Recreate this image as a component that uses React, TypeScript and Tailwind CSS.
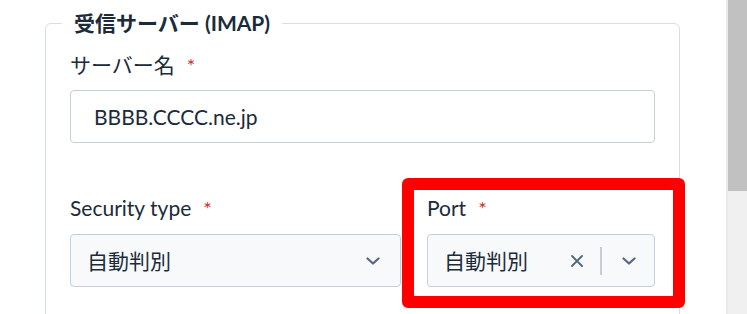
import React from 'react';

const Chevron: React.FC = () => (
  <svg width="14" height="8" viewBox="0 0 14 8" fill="none" className="shrink-0">
    <path d="M1.5 1.5L7 6.5L12.5 1.5" stroke="#53687c" strokeWidth="2.2" strokeLinecap="round" strokeLinejoin="round" />
  </svg>
);

const Cross: React.FC = () => (
  <svg width="12" height="12" viewBox="0 0 12 12" fill="none" className="shrink-0">
    <path d="M1 1L11 11M11 1L1 11" stroke="#53687c" strokeWidth="1.8" strokeLinecap="round" />
  </svg>
);

const Label: React.FC<{ text: string }> = ({ text }) => (
  <div className="flex items-start text-[21px] leading-7 text-[#1c2b3a]">
    <span>{text}</span>
    <span className="ml-3 mt-[4px] text-[20px] leading-none text-[#c9302c]">*</span>
  </div>
);

const App: React.FC = () => {
  return (
    <div
      className="relative flex h-[314px] w-[747px] overflow-hidden bg-white"
      style={{ fontFamily: "Lato, 'Noto Sans CJK JP', sans-serif" }}
    >
      <div className="flex-1 pl-[45px] pr-[46px] pt-[9px]">
        <fieldset className="rounded-md border border-[#d6dee6] px-6 pt-[14px] pb-8">
          <legend className="-ml-2 px-3 text-[21px] font-bold leading-7 text-[#1c2b3a]">受信サーバー (IMAP)</legend>

          <Label text="サーバー名" />
          <div className="mt-[11px] flex h-[53px] items-center rounded border border-[#c3cfda] bg-white pl-[23px] pr-6 text-[21px] text-[#1c2b3a]">
            BBBB.CCCC.ne.jp
          </div>

          <div className="mt-[51px] grid grid-cols-[331px_228px] gap-x-[26px]">
            <div>
              <Label text="Security type" />
              <div className="mt-3 flex h-[53px] items-center justify-between rounded border border-[#c3cfda] bg-[#f7f9fb] pl-4 pr-5 text-[21px] text-[#1c2b3a]">
                <span>自動判別</span>
                <Chevron />
              </div>
            </div>
            <div>
              <Label text="Port" />
              <div className="mt-3 flex h-[53px] items-center rounded border border-[#c3cfda] bg-[#f7f9fb] pl-4 pr-[18px] text-[21px] text-[#1c2b3a]">
                <span className="flex-1">自動判別</span>
                <Cross />
                <div className="ml-[17px] mr-5 h-7 w-[2px] bg-[#c9cdd1]" />
                <Chevron />
              </div>
            </div>
          </div>
        </fieldset>
      </div>

      <div className="w-[22px] border-l-2 border-[#e9e9e9] bg-[#f0f0f0]">
        <div className="h-[191px] bg-[#c1c1c1]" />
      </div>

      <div className="pointer-events-none absolute left-[402px] top-[178px] h-[130px] w-[283px] rounded-md border-[12px] border-[#ff0000]" />
    </div>
  );
};

export default App;
